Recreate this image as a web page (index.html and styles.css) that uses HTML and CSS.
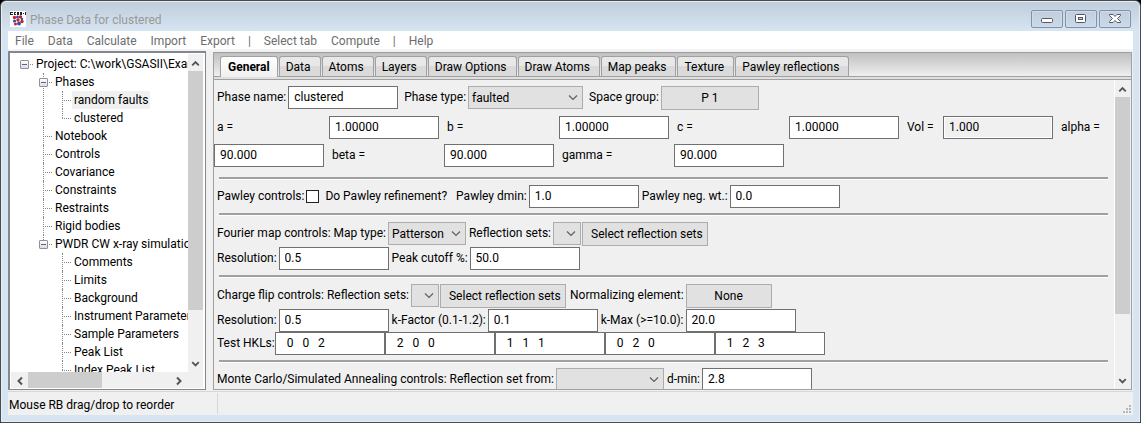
FILE: index.html
```html
<!DOCTYPE html>
<html lang="en">
<head>
<meta charset="utf-8">
<title>Phase Data for clustered</title>
<link rel="stylesheet" href="styles.css">
</head>
<body>
<div class="window">
  <header class="titlebar">
    <svg class="app-icon" viewBox="0 0 16 16" aria-hidden="true">
      <rect width="16" height="16" fill="#fff"/>
      <path d="M0 1h3v1H1v1h2v1H0zM4 1h2v1H5v1h1v1H4zM7 1h2v3H7zM10 1h2v3h-2zM13 2h1v1h-1zM15 1h1v3h-1z" fill="#222"/>
      <g fill="#c8202c"><circle cx="4.500" cy="6.500" r="1.700"/><circle cx="10.500" cy="6" r="1.700"/><circle cx="8" cy="9" r="1.700"/><circle cx="12" cy="10.500" r="1.700"/><circle cx="5.500" cy="13" r="1.500"/></g>
      <g fill="#3350a8"><circle cx="7.500" cy="6" r="1.500"/><circle cx="4.500" cy="10" r="1.600"/><circle cx="12" cy="8" r="1.200"/><circle cx="9" cy="12.500" r="1.900"/></g>
    </svg>
    <h1 class="title">Phase Data for clustered</h1>
    <div class="caption">
      <button class="caption-button" type="button" aria-label="Minimize"><svg viewBox="0 0 30 16"><rect x="9.500" y="7.500" width="11" height="4" rx="1" fill="#fff" stroke="#535666"/></svg></button>
      <button class="caption-button" type="button" aria-label="Maximize"><svg viewBox="0 0 30 16"><rect x="9.500" y="3.500" width="10" height="8" rx="1" fill="#fff" stroke="#535666"/><rect x="12.500" y="6.500" width="4" height="2" fill="#c3d0de" stroke="#535666"/></svg></button>
      <button class="caption-button" type="button" aria-label="Close"><svg viewBox="0 0 30 16"><path d="M9.500 3.500h3.500l2 2 2-2h3.500v1L17.500 7.500l3 3v1H17l-2-2-2 2H9.500v-1l3-3-3-3z" fill="#fff" stroke="#535666"/></svg></button>
    </div>
  </header>
  <div class="client">
    <nav class="menubar">
      <button type="button">File</button><button type="button">Data</button><button type="button">Calculate</button><button type="button">Import</button><button type="button">Export</button><span class="menu-bar">|</span><button type="button">Select tab</button><button type="button">Compute</button><span class="menu-bar">|</span><button type="button">Help</button>
    </nav>
    <div class="split">
      <aside class="tree-panel">
        <div class="tree-view">
          <ul class="tree">
            <li class="root"><span class="node"><button class="expander" type="button" aria-label="Collapse"></button>Project: C:\work\GSASII\Examples</span>
              <ul>
                <li><span class="node"><button class="expander" type="button" aria-label="Collapse"></button>Phases</span>
                  <ul>
                    <li><span class="node"><span class="selected">random faults</span></span></li>
                    <li><span class="node">clustered</span></li>
                  </ul>
                </li>
                <li><span class="node">Notebook</span></li>
                <li><span class="node">Controls</span></li>
                <li><span class="node">Covariance</span></li>
                <li><span class="node">Constraints</span></li>
                <li><span class="node">Restraints</span></li>
                <li><span class="node">Rigid bodies</span></li>
                <li><span class="node"><button class="expander" type="button" aria-label="Collapse"></button>PWDR CW x-ray simulation</span>
                  <ul>
                    <li><span class="node">Comments</span></li>
                    <li><span class="node">Limits</span></li>
                    <li><span class="node">Background</span></li>
                    <li><span class="node">Instrument Parameters</span></li>
                    <li><span class="node">Sample Parameters</span></li>
                    <li><span class="node">Peak List</span></li>
                    <li><span class="node">Index Peak List</span></li>
                  </ul>
                </li>
              </ul>
            </li>
          </ul>
          <div class="scroll-y">
            <button class="arrow" type="button" aria-label="Scroll up"><svg viewBox="0 0 16 16"><path d="M4.500 10.500L8 7l3.500 3.500"/></svg></button>
            <div class="track"><div class="thumb tree-thumb"></div></div>
            <button class="arrow" type="button" aria-label="Scroll down"><svg viewBox="0 0 16 16"><path d="M4.500 6L8 9.500 11.500 6"/></svg></button>
          </div>
        </div>
        <div class="scroll-x">
          <button class="arrow" type="button" aria-label="Scroll left"><svg viewBox="0 0 16 16"><path d="M10.500 4.500L7 8l3.500 3.500"/></svg></button>
          <div class="track"><div class="thumb"></div></div>
          <button class="arrow" type="button" aria-label="Scroll right"><svg viewBox="0 0 16 16"><path d="M5.500 4.500L9 8l-3.500 3.500"/></svg></button>
          <span class="corner"></span>
        </div>
      </aside>
      <main class="notebook">
        <div class="tabs" role="tablist">
          <button class="tab active" type="button" role="tab" aria-selected="true">General</button><button class="tab" type="button" role="tab">Data</button><button class="tab" type="button" role="tab">Atoms</button><button class="tab" type="button" role="tab">Layers</button><button class="tab" type="button" role="tab">Draw Options</button><button class="tab" type="button" role="tab">Draw Atoms</button><button class="tab" type="button" role="tab">Map peaks</button><button class="tab" type="button" role="tab">Texture</button><button class="tab" type="button" role="tab">Pawley reflections</button>
        </div>
        <div class="page">
          <form class="form">
            <div class="row">
              <label for="name">Phase name:</label><input id="name" type="text" value="clustered">
              <label class="spaced" for="type">Phase type:</label><select class="type" id="type"><option>faulted</option></select>
              <label class="spaced" for="group">Space group:</label><button class="button group" id="group" type="button">P 1</button>
            </div>
            <div class="cell">
              <div class="cell-row">
                <label class="wide" for="a">a =</label><input id="a" type="text" value="1.00000">
                <label class="wide" for="b">b =</label><input id="b" type="text" value="1.00000">
                <label class="wide" for="c">c =</label><input id="c" type="text" value="1.00000">
                <label class="volume" for="vol">Vol =</label><input class="readonly" id="vol" type="text" value="1.000" readonly>
                <label for="alpha">alpha =</label>
              </div>
              <div class="cell-row">
                <input id="alpha" type="text" value="90.000">
                <label class="wide" for="beta">beta =</label><input id="beta" type="text" value="90.000">
                <label class="wide" for="gamma">gamma =</label><input id="gamma" type="text" value="90.000">
              </div>
            </div>
            <hr>
            <div class="row">
              <span class="label">Pawley controls:</span><input id="refine" type="checkbox"><label class="check" for="refine">Do Pawley refinement?</label>
              <label for="dmin">Pawley dmin:</label><input id="dmin" type="text" value="1.0">
              <label for="wt">Pawley neg. wt.:</label><input id="wt" type="text" value="0.0">
            </div>
            <hr>
            <div class="row bottom-gap">
              <label for="map">Fourier map controls: Map type:</label><select class="map" id="map"><option>Patterson</option></select>
              <label for="sets">Reflection sets:</label><select class="tiny" id="sets"><option></option></select><button class="button" type="button">Select reflection sets</button>
            </div>
            <div class="row">
              <label for="res">Resolution:</label><input id="res" type="text" value="0.5">
              <label for="cutoff">Peak cutoff %:</label><input id="cutoff" type="text" value="50.0">
            </div>
            <hr>
            <div class="row bottom-gap">
              <label for="flip">Charge flip controls: Reflection sets:</label><select class="tiny" id="flip"><option></option></select><button class="button" type="button">Select reflection sets</button>
              <label for="norm">Normalizing element:</label><button class="button norm" id="norm" type="button">None</button>
            </div>
            <div class="row">
              <label for="res2">Resolution:</label><input id="res2" type="text" value="0.5">
              <label for="kf">k-Factor (0.1-1.2):</label><input id="kf" type="text" value="0.1">
              <label for="km">k-Max (&gt;=10.0):</label><input id="km" type="text" value="20.0">
            </div>
            <div class="row hkls">
              <label for="h1">Test HKLs:</label><input id="h1" type="text" value="0   0   2"><input aria-label="HKL 2" type="text" value="2   0   0"><input aria-label="HKL 3" type="text" value="1   1   1"><input aria-label="HKL 4" type="text" value="0   2   0"><input aria-label="HKL 5" type="text" value="1   2   3">
            </div>
            <hr>
            <div class="row">
              <label for="from">Monte Carlo/Simulated Annealing controls: Reflection set from:</label><select class="from" id="from"><option></option></select>
              <label for="dm">d-min:</label><input id="dm" type="text" value="2.8">
            </div>
          </form>
          <div class="scroll-y page-scroll">
            <button class="arrow" type="button" aria-label="Scroll up"><svg viewBox="0 0 16 16"><path d="M4.500 10.500L8 7l3.500 3.500"/></svg></button>
            <div class="track"><div class="thumb"></div></div>
            <button class="arrow" type="button" aria-label="Scroll down"><svg viewBox="0 0 16 16"><path d="M4.500 6L8 9.500 11.500 6"/></svg></button>
          </div>
        </div>
      </main>
    </div>
    <footer class="statusbar">
      <span class="status">Mouse RB drag/drop to reorder</span>
      <svg class="grip" viewBox="0 0 8 8" aria-hidden="true"><path d="M6 0h2v2H6zM3 3h2v2H3zM6 3h2v2H6zM0 6h2v2H0zM3 6h2v2H3zM6 6h2v2H6z" fill="#b8b8b8"/></svg>
    </footer>
  </div>
</div>
</body>
</html>
```
FILE: styles.css
```css
* { box-sizing: border-box; }

body {
  margin: 0;
  background: #000;
  color: #000;
  font: 12px/18px Roboto, "Open Sans", sans-serif;
}

button, input, select { font: inherit; color: inherit; margin: 0; }

.window {
  display: flex;
  flex-direction: column;
  height: 100vh;
  padding: 0 7px 7px;
  border: 1px solid #4b4b4f;
  border-radius: 6px 6px 0 0;
  background: linear-gradient(#bfcddb, #d7e4f2 30px);
  box-shadow: inset 0 0 0 1px #e6eef6;
}

.titlebar { display: flex; height: 30px; flex: none; }
.app-icon { width: 16px; height: 16px; margin: 10px 4px 0 2px; }
.title { flex: 1; margin: 10px 0 0; font-size: 12px; font-weight: 400; color: #999; }
.caption { display: flex; gap: 2px; padding: 9px 2px 0 0; }
.caption-button {
  width: 32px;
  height: 18px;
  padding: 0;
  border: 1px solid #8291ab;
  border-radius: 2px;
  background: linear-gradient(#c0cddc, #ccd9e7);
  box-shadow: inset 0 0 0 1px #d0dce9;
}
.caption-button svg { display: block; width: 30px; height: 16px; }

.client { display: flex; flex: 1; min-height: 0; flex-direction: column; background: #f0f0f0; }

.menubar { display: flex; flex: none; height: 20px; background: #fff; border-bottom: 2px solid #f3f3f3; color: #6d6d6d; }
.menubar button, .menu-bar { padding: 0 7px; border: 0; background: none; line-height: 20px; }
.menubar .menu-bar { padding: 0 6px; }

.split { display: flex; flex: 1; min-height: 0; gap: 7px; padding-right: 1px; }

.tree-panel {
  display: flex;
  flex: none;
  width: 198px;
  flex-direction: column;
  border: 2px solid #828790;
  border-width: 2px 1px 1px 2px;
  padding: 1px 2px 1px 1px;
  background: #fff;
}
.tree-view { display: flex; flex: 1; min-width: 0; min-height: 0; }
.tree { flex: 1; min-width: 0; overflow: hidden; }
.tree, .tree ul { margin: 0; padding: 0; list-style: none; white-space: nowrap; }
.tree { padding: 1px 0 0 6px; }
.tree li { position: relative; padding-left: 19px; }
.node { display: block; height: 18px; }
.tree li::before {
  content: "";
  position: absolute;
  left: 7px;
  top: 9px;
  width: 9px;
  border-top: 1px dotted #888;
}
.tree li li::after {
  content: "";
  position: absolute;
  left: 7px;
  top: 0;
  bottom: 0;
  border-left: 1px dotted #888;
}
.tree li li:last-child::after { bottom: auto; height: 9px; }
.selected { display: inline-block; margin-left: -2px; padding: 0 2px; background: #f0f0f0; }
.expander {
  position: absolute;
  z-index: 1;
  left: 3px;
  top: 5px;
  width: 9px;
  height: 9px;
  padding: 0;
  border: 1px solid #919191;
  border-radius: 1px;
  background: linear-gradient(#4b63a7, #4b63a7) center / 5px 1px no-repeat, linear-gradient(#fff, #ddd);
}

.scroll-y, .scroll-x { display: flex; flex: none; background: #f0f0f0; }
.scroll-y { flex-direction: column; width: 15px; }
.scroll-x { height: 16px; }
.track { flex: 1; min-height: 0; }
.thumb { background: #cdcdcd; }
.scroll-y .thumb { height: 79%; }
.scroll-y .tree-thumb { height: 84%; }
.scroll-x .thumb { width: 52%; height: 100%; }
.corner { width: 15px; }
.arrow { flex: none; width: 17px; height: 17px; padding: 0; border: 0; background: none; }
.scroll-y .arrow { width: 15px; }
.arrow svg { display: block; width: 100%; height: 16px; fill: none; stroke: #555; stroke-width: 2; }

.notebook { display: flex; flex: 1; min-width: 0; flex-direction: column; margin-top: 1px; border: 1px solid #a0a0a0; }
.tabs {
  display: flex;
  flex: none;
  gap: 1px;
  height: 27px;
  padding: 3px 6px 0;
  border-bottom: 1px solid #a0a0a0;
  background:
    linear-gradient(#a0a0a0, #a0a0a0) 0 23px / 100% 1px no-repeat,
    linear-gradient(#c0c0c0, #efefef 23px, #e0e0e0 23px);
}
.tab {
  height: 20px;
  padding: 0 9px 0 6px;
  border: 1px solid #a0a0a0;
  border-bottom: 0;
  border-radius: 3px 3px 0 0;
  background: linear-gradient(#e8e8e8 50%, #dadada 50%);
  line-height: 20px;
  white-space: nowrap;
}
.tab.active { height: 21px; padding: 0 7px; background: linear-gradient(#fff, #f0f0f0); font-weight: 700; }

.page { display: flex; flex: 1; min-height: 0; }
.form { flex: 1; min-width: 0; padding-top: 6px; overflow: hidden; white-space: nowrap; }
.page-scroll { margin-right: 1px; border-left: 1px solid #fff; width: 16px; }

.row, .cell-row { display: flex; align-items: flex-start; }
label, .label { flex: none; padding: 0 2px 0 3px; line-height: 23px; }
.spaced { padding-left: 6px; }
.wide { width: 115px; }
.volume { width: 39px; }
.hkls label { padding-right: 0; }

input[type="text"] {
  flex: none;
  width: 110px;
  height: 23px;
  padding: 0 5px 2px;
  border: 1px solid #707070;
  border-radius: 0;
  background: #fff;
  outline: 0;
}
.readonly[type="text"] { background: #f0f0f0; box-shadow: inset 0 0 0 1px #fff; }
.hkls input[type="text"] { padding-left: 11px; }

input[type="checkbox"] { appearance: none; width: 13px; height: 13px; margin-top: 5px; border: 1px solid #222; background: #fff; }
.check { padding: 0 6px; }

select {
  flex: none;
  appearance: none;
  height: 23px;
  padding: 0 3px;
  border: 1px solid #adadad;
  border-radius: 0;
  background: #e1e1e1 url("data:image/svg+xml,%3Csvg xmlns='http://www.w3.org/2000/svg' width='10' height='6'%3E%3Cpath d='M1 .5l4 4 4-4' fill='none' stroke='%23606060' stroke-width='1.200'/%3E%3C/svg%3E") right 4px center no-repeat;
}
.type { width: 115px; }
.map { width: 78px; }
.tiny { width: 28px; }
.from { width: 108px; }

.button { flex: none; height: 24px; padding: 0 8px; border: 1px solid #adadad; background: #e1e1e1; }
.tiny + .button { width: 126px; margin-left: 1px; }
.button + label { padding-left: 4px; }
.group { width: 98px; }
.norm { width: 86px; }

.cell { display: grid; gap: 5px; padding: 6px 0 5px; }
.cell-row input[type="text"] { margin-right: 5px; }
.bottom-gap { margin-bottom: 1px; }

hr { height: 3px; margin: 5px 6px 5px 5px; border: 0; border-bottom: 1px solid #fff; background: #a0a0a0; }
hr + .bottom-gap { margin-top: 6px; }

.statusbar { display: flex; flex: none; height: 24px; margin-top: 1px; border-top: 1px solid #d7d7d7; }
.status { flex: 0 0 210px; margin: 1px 0; padding: 3px 1px; line-height: 18px; border-right: 1px solid #d7d7d7; }
.grip { width: 8px; height: 8px; margin: 13px 2px 0 auto; }
```
